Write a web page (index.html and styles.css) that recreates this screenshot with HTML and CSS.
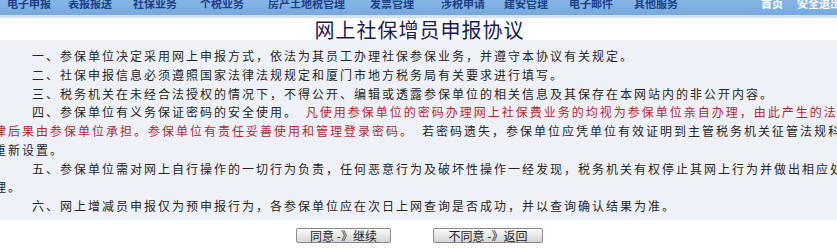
FILE: index.html
```html
<!DOCTYPE html>
<html lang="zh-CN">
<head>
<meta charset="utf-8">
<title>网上社保增员申报协议</title>
<link rel="stylesheet" href="styles.css">
</head>
<body>
<div class="page">
  <nav class="topnav">
    <ul class="menu">
      <li>电子申报</li>
      <li>表报报送</li>
      <li>社保业务</li>
      <li>个税业务</li>
      <li>房产土地税管理</li>
      <li>发票管理</li>
      <li>涉税申请</li>
      <li>建安管理</li>
      <li>电子邮件</li>
      <li>其他服务</li>
    </ul>
    <ul class="menu menu-right">
      <li>首页</li>
      <li>安全退出</li>
    </ul>
  </nav>
  <div class="navline"></div>
  <h1 class="title">网上社保增员申报协议</h1>
  <div class="agreement">
    <p>一、参保单位决定采用网上申报方式，依法为其员工办理社保参保业务，并遵守本协议有关规定。</p>
    <p>二、社保申报信息必须遵照国家法律法规规定和厦门市地方税务局有关要求进行填写。</p>
    <p>三、税务机关在未经合法授权的情况下，不得公开、编辑或透露参保单位的相关信息及其保存在本网站内的非公开内容。</p>
    <p>四、参保单位有义务保证密码的安全使用。 <span class="warn">凡使用参保单位的密码办理网上社保费业务的均视为参保单位亲自办理，由此产生的法律后果由参保单位承担。参保单位有责任妥善使用和管理登录密码。</span><span class="gap">若密码遗失，参保单位应凭单位有效证明到主管税务机关征管法规科重新设置。</span></p>
    <p>五、参保单位需对网上自行操作的一切行为负责，任何恶意行为及破坏性操作一经发现，税务机关有权停止其网上行为并做出相应处理。</p>
    <p>六、网上增减员申报仅为预申报行为，各参保单位应在次日上网查询是否成功，并以查询确认结果为准。</p>
  </div>
  <div class="actions">
    <button class="btn btn-agree" type="button">同意 -》继续</button>
    <button class="btn btn-refuse" type="button">不同意 -》返回</button>
  </div>
</div>
</body>
</html>
```

FILE: styles.css
```css
html, body {
  margin: 0;
  padding: 0;
  background: #ffffff;
  overflow: hidden;
}

body {
  font-family: "Noto Sans CJK SC", "Liberation Sans", sans-serif;
}

.page {
  width: 851px;
  margin-left: -6px;
}

.topnav {
  display: flex;
  justify-content: space-between;
  height: 24px;
  margin-top: -9px;
  padding: 0 4px 0 13px;
  background: linear-gradient(#8fbdea, #76a9de);
}

.menu {
  display: grid;
  grid-template-columns: 61px 65px 67px 68px 102px 71px 63px 65px 65px auto;
  margin: 0;
  padding: 0;
  list-style: none;
  font-size: 11px;
  font-weight: bold;
  line-height: 24px;
  color: #1b3f86;
  white-space: nowrap;
}

.menu-right {
  grid-template-columns: 36px auto;
  color: #ffffff;
}

.navline {
  height: 3px;
  background: #d3e2f1;
}

.title {
  margin: 0;
  padding-top: 1px;
  height: 21px;
  font-size: 20px;
  font-weight: normal;
  line-height: 21px;
  letter-spacing: 1px;
  text-align: center;
  color: #16195a;
}

.agreement {
  padding: 7px 0 4.5px;
  background: #eef2f8;
  font-size: 12px;
  line-height: 18.75px;
  letter-spacing: 2px;
  color: #262626;
}

.agreement p {
  margin: 0;
  text-indent: 38px;
}

.warn {
  margin-left: 3px;
  color: #b3282d;
}

.gap {
  margin-left: 8px;
}

.actions {
  display: flex;
  justify-content: center;
  gap: 42px;
  padding-top: 8px;
}

.btn {
  height: 15px;
  padding: 0;
  border: 1px solid #8a8a8a;
  border-radius: 2px;
  background: linear-gradient(#fbfbfb, #e4e4e4 60%, #d6d6d6);
  font-family: "Noto Sans CJK SC", sans-serif;
  font-size: 12px;
  line-height: 13px;
  color: #222222;
}

.btn-agree {
  width: 95px;
}

.btn-refuse {
  width: 110px;
}
```
